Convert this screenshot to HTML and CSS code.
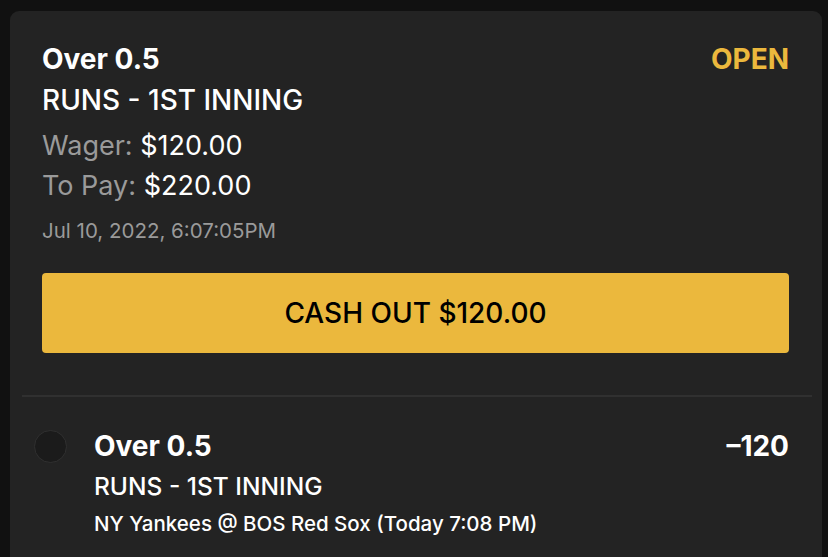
FILE: index.html
```html
<!DOCTYPE html>
<html>
<head>
<meta charset="utf-8">
<link rel="stylesheet" href="styles.css">
</head>
<body>
<div class="card">
  <div class="summary">
    <div class="row">
      <div class="title">Over 0.5</div>
      <div class="status">OPEN</div>
    </div>
    <div class="market">RUNS - 1ST INNING</div>
    <div class="amount amount-first"><span class="label">Wager:</span> $120.00</div>
    <div class="amount"><span class="label">To Pay:</span> $220.00</div>
    <div class="date">Jul 10, 2022, 6:07:05PM</div>
    <div class="cashout">CASH OUT $120.00</div>
  </div>
  <div class="divider"></div>
  <div class="leg">
    <div class="dot"></div>
    <div class="leg-body">
      <div class="row">
        <div class="title">Over 0.5</div>
        <div class="odds">&ndash;120</div>
      </div>
      <div class="leg-market">RUNS - 1ST INNING</div>
      <div class="game">NY Yankees @ BOS Red Sox (Today 7:08 PM)</div>
    </div>
  </div>
</div>
</body>
</html>
```
FILE: styles.css
```css
html, body {
  margin: 0;
  padding: 0;
  background: #111111;
  height: 557px;
  overflow: hidden;
}
body {
  font-family: Inter, "Noto Sans", sans-serif;
  color: #ffffff;
  padding: 11px 6px 0 10px;
}
.card {
  background: #232323;
  border-radius: 9px 9px 0 0;
  height: 546px;
  overflow: hidden;
}
.summary {
  padding: 31px 33px 0 32px;
}
.row {
  display: flex;
  justify-content: space-between;
  align-items: baseline;
}
.title {
  font-size: 28px;
  font-weight: 700;
  line-height: 34px;
}
.status {
  font-size: 28px;
  font-weight: 700;
  color: #ebb83d;
  line-height: 34px;
}
.market {
  font-size: 28px;
  line-height: 34px;
  font-weight: 500;
  margin-top: 7px;
}
.amount {
  font-size: 27px;
  line-height: 40px;
}
.amount-first {
  margin-top: 9px;
}
.label {
  color: #9a9a9a;
}
.date {
  font-size: 20.5px;
  line-height: 26px;
  color: #9a9a9a;
  margin-top: 12px;
}
.cashout {
  margin-top: 29px;
  height: 80px;
  background: #ebb83d;
  border-radius: 4px;
  color: #000000;
  font-size: 28px;
  font-weight: 500;
  display: flex;
  align-items: center;
  justify-content: center;
}
.divider {
  margin: 42px 10px 0 12px;
  height: 2px;
  background: #303030;
}
.leg {
  display: flex;
  padding: 32px 33px 0 24px;
  gap: 27px;
}
.dot {
  width: 31px;
  height: 31px;
  margin-top: 1px;
  border-radius: 50%;
  background: #1b1b1b;
  border: 1.5px solid #303030;
  flex: none;
}
.leg-body {
  flex: 1;
}
.odds {
  font-size: 28px;
  font-weight: 700;
  line-height: 34px;
}
.leg-market {
  font-size: 24.5px;
  line-height: 30px;
  font-weight: 500;
  margin-top: 8px;
}
.game {
  font-size: 20.5px;
  line-height: 26px;
  font-weight: 500;
  margin-top: 10px;
}
```
